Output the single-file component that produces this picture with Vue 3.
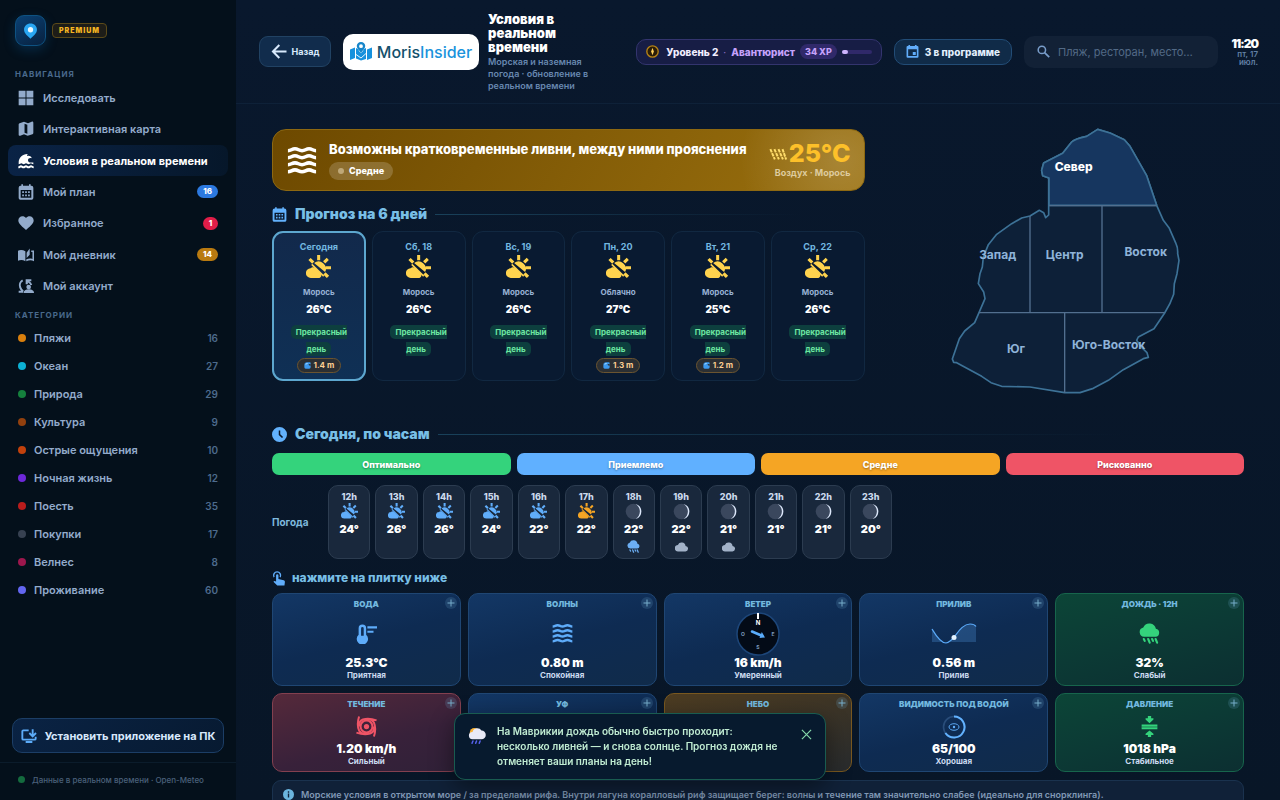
<script setup>
import { ref } from 'vue'

const nav = [
  { icon: 'grid', label: 'Исследовать' },
  { icon: 'map', label: 'Интерактивная карта' },
  { icon: 'tsunami', label: 'Условия в реальном времени', active: true },
  { icon: 'calendar', label: 'Мой план', badge: 16, tone: 'blue' },
  { icon: 'heart', label: 'Избранное', badge: 1, tone: 'red' },
  { icon: 'journal', label: 'Мой дневник', badge: 14, tone: 'gold' },
  { icon: 'account', label: 'Мой аккаунт' },
]

const categories = [
  { label: 'Пляжи', count: 16, color: '#d97f0d' },
  { label: 'Океан', count: 27, color: '#0cb0d4' },
  { label: 'Природа', count: 29, color: '#15803d' },
  { label: 'Культура', count: 9, color: '#92400e' },
  { label: 'Острые ощущения', count: 10, color: '#c2410c' },
  { label: 'Ночная жизнь', count: 12, color: '#6d28d9' },
  { label: 'Поесть', count: 35, color: '#b91c1c' },
  { label: 'Покупки', count: 17, color: '#374151' },
  { label: 'Велнес', count: 8, color: '#9d174d' },
  { label: 'Проживание', count: 60, color: '#6366f1' },
]

const days = [
  { name: 'Сегодня', text: 'Морось', temp: '26°C', wave: '1.4 m', today: true },
  { name: 'Сб, 18', text: 'Морось', temp: '26°C' },
  { name: 'Вс, 19', text: 'Морось', temp: '26°C' },
  { name: 'Пн, 20', text: 'Облачно', temp: '27°C', wave: '1.3 m' },
  { name: 'Вт, 21', text: 'Морось', temp: '25°C', wave: '1.2 m' },
  { name: 'Ср, 22', text: 'Морось', temp: '26°C' },
]

const legend = [
  { label: 'Оптимально', tone: 'green' },
  { label: 'Приемлемо', tone: 'blue' },
  { label: 'Средне', tone: 'orange' },
  { label: 'Рискованно', tone: 'red' },
]

const hours = [
  { h: '12h', t: '24°', icon: 'partly' },
  { h: '13h', t: '26°', icon: 'partly' },
  { h: '14h', t: '26°', icon: 'partly' },
  { h: '15h', t: '24°', icon: 'partly' },
  { h: '16h', t: '22°', icon: 'partly' },
  { h: '17h', t: '22°', icon: 'partly', warm: true },
  { h: '18h', t: '22°', icon: 'moon', extra: 'rain' },
  { h: '19h', t: '22°', icon: 'moon', extra: 'cloud' },
  { h: '20h', t: '21°', icon: 'moon', extra: 'cloud' },
  { h: '21h', t: '21°', icon: 'moon' },
  { h: '22h', t: '21°', icon: 'moon' },
  { h: '23h', t: '20°', icon: 'moon' },
]

const tiles = [
  { title: 'ВОДА', icon: 'thermo', value: '25.3°C', note: 'Приятная', tone: 'blue' },
  { title: 'ВОЛНЫ', icon: 'waves', value: '0.80 m', note: 'Спокойная', tone: 'blue' },
  { title: 'ВЕТЕР', icon: 'compass', value: '16 km/h', note: 'Умеренный', tone: 'blue' },
  { title: 'ПРИЛИВ', icon: 'tide', value: '0.56 m', note: 'Прилив', tone: 'blue' },
  { title: 'ДОЖДЬ · 12H', icon: 'rain', value: '32%', note: 'Слабый', tone: 'green' },
  { title: 'ТЕЧЕНИЕ', icon: 'vortex', value: '1.20 km/h', note: 'Сильный', tone: 'red' },
  { title: 'УФ', icon: 'sun', tone: 'blue' },
  { title: 'НЕБО', icon: 'cloud', tone: 'amber' },
  { title: 'ВИДИМОСТЬ ПОД ВОДОЙ', icon: 'gauge', value: '65/100', note: 'Хорошая', tone: 'blue' },
  { title: 'ДАВЛЕНИЕ', icon: 'pressure', value: '1018 hPa', note: 'Стабильное', tone: 'green' },
]

const query = ref('')
const xp = ref(20)
const toastOpen = ref(true)
</script>

<template>
  <div class="app">
    <svg class="sprite" aria-hidden="true">
      <symbol id="i-grid" viewBox="0 0 24 24"><path fill="currentColor" d="M1 1h10.300v10.300H1zM1 12.700h10.300V23H1zM12.700 12.700H23V23H12.700zM12.700 1H23v10.300H12.700z" /></symbol>
      <symbol id="i-map" viewBox="0 0 24 24"><path fill="currentColor" d="M14.500 22 9 20 3.500 22C2.200 22.500 1 21.700 1 20.500V5c0-.8.500-1.400 1.300-1.700L9 1l6 2.200L20.500 1C21.700.6 23 1.300 23 2.600V18c0 .8-.5 1.400-1.300 1.700zM14 19.300V5.500L9.800 4v13.700z" /></symbol>
      <symbol id="i-tsunami" viewBox="0 0 24 24">
        <path fill="currentColor" d="M1 14C1 7 7 1 15 1.500c-1.500 1-1.900 2.200-1 3.100 2-.9 5.500.2 7 3.400-3-1.300-6 0-6 2.800 0 2 1.700 3.500 4.500 3.500H23v2.500c-2 0-2.500-1.300-3.600-1.300-1.500 0-1.800 1.300-3.500 1.300S13.500 15.500 12 15.500s-1.800 1.300-3.400 1.300-2.300-1.300-3.400-1.300C4 15.500 2.500 16.800 1 16.800z" />
        <path fill="none" stroke="currentColor" stroke-width="3" d="M.5 21.500c1.900 0 2.200-1.500 3.900-1.500s2.200 1.500 3.800 1.500S10.300 20 12 20s2.100 1.500 3.700 1.500 2.200-1.500 3.800-1.500 2 1.500 4 1.500" />
      </symbol>
      <symbol id="i-calendar" viewBox="0 0 24 24"><path fill="currentColor" fill-rule="evenodd" d="M5 .500h2.500v2h9v-2H19v2h1a3 3 0 0 1 3 3V21a2.500 2.500 0 0 1-2.500 2.500h-17A2.500 2.500 0 0 1 1 21V5.500a3 3 0 0 1 3-3h1zM4 9v11.500h16V9z" /><path fill="currentColor" d="M6.300 11h2.600v2.600H6.300zM10.700 11h2.600v2.600h-2.600zM15.100 11h2.600v2.600h-2.600zM6.300 15.600h2.600v2.600H6.300zM10.700 15.600h2.600v2.600h-2.600zM15.100 15.600h2.600v2.600h-2.600z" /></symbol>
      <symbol id="i-heart" viewBox="0 0 24 24"><path fill="currentColor" d="M12 22.500l-1.600-1.400C4.600 16 .5 12.400.5 8.200.5 4.700 3.200 2 6.700 2c2 0 4 1 5.300 2.500C13.300 3 15.300 2 17.300 2c3.500 0 6.200 2.700 6.200 6.200 0 4.200-4.100 7.800-9.900 12.900z" /></symbol>
      <symbol id="i-journal" viewBox="0 0 26 24"><path fill="currentColor" d="M0 5c3.500-1.700 8-1.500 12 .8V22c-4-2.200-8-2.200-12-.8zM14 8.500 19 1.500v10L14 17zM21.500 4.500H26V22c-4-2-8-2-12.500.3V19c3-1.300 6.500-1.500 10-.6V7h-2z" /></symbol>
      <symbol id="i-account" viewBox="0 0 24 24"><path fill="none" stroke="currentColor" stroke-width="3" d="M7 3.500A8.500 8.500 0 0 0 3.300 14c.8 2.400 2.200 4.300 4.400 6M1 20.500h7" /><path fill="currentColor" d="M11.500 2h8.500v2.700h-3c2 1.200 3.700 3.300 4.300 5.800h-3c-.5-1.500-1.700-2.800-3.500-3.600V9.500h-3.300z" /><circle cx="16" cy="13.500" r="3.500" fill="currentColor" /><path fill="currentColor" d="M8.500 22.500c0-3.800 3-5.500 7.500-5.500s8 1.700 8 5.500z" /></symbol>
      <symbol id="i-install" viewBox="0 0 24 24"><path fill="none" stroke="currentColor" stroke-width="2.800" d="M11.500 3.500H3.500A1.500 1.500 0 0 0 2 5v11a1.500 1.500 0 0 0 1.500 1.500h17A1.500 1.500 0 0 0 22 16v-3M17.500 2v10M12.500 7.500l5 5 5-5M7 21h10" /></symbol>
      <symbol id="i-back" viewBox="0 0 24 24"><path fill="none" stroke="currentColor" stroke-width="3.200" d="M24 12H3M12.500 1.500 2.300 12l10.200 10.500" /></symbol>
      <symbol id="i-event" viewBox="0 0 24 24"><path fill="currentColor" fill-rule="evenodd" d="M4.500 0h3v2h9V0h3v2H21a2 2 0 0 1 2 2v17.500a2 2 0 0 1-2 2H3a2 2 0 0 1-2-2V4a2 2 0 0 1 2-2h1.500zM4 8v12.500h16V8zM12.500 13H18v5.500h-5.500z" /></symbol>
      <symbol id="i-search" viewBox="0 0 24 24"><circle cx="9" cy="9" r="6.800" fill="none" stroke="currentColor" stroke-width="2.800" /><path stroke="currentColor" stroke-width="3.200" d="m13.500 13.500 9 9" /></symbol>
      <symbol id="i-waves" viewBox="0 0 32 28"><path fill="none" stroke="currentColor" stroke-width="3.800" d="M1 3.500c3.500 0 4-2 7.500-2s4 2 7.500 2 4-2 7.500-2 4 2 7.500 2M1 11c3.500 0 4-2 7.500-2s4 2 7.500 2 4-2 7.500-2 4 2 7.500 2M1 18.500c3.500 0 4-2 7.500-2s4 2 7.500 2 4-2 7.500-2 4 2 7.500 2M1 26c3.500 0 4-2 7.500-2s4 2 7.500 2 4-2 7.500-2 4 2 7.500 2" /></symbol>
      <symbol id="i-shower" viewBox="0 0 20 14"><path fill="none" stroke="currentColor" stroke-width="2.200" stroke-dasharray="4 .8" d="m1.500 1 5 11.500M6 1l5 11.500M10.500 1l5 11.500M15 1l4 11.500" /></symbol>
      <symbol id="i-partly" viewBox="0 0 24 24">
        <path fill="currentColor" d="M10.700 0h2.900v5h-2.900zM19 10.900h5v2.900h-5zM2.300 4.900 4.500 2.800 8 6.200 5.900 8.300zM16.400 6.100l3.500-3.500 2 2.100-3.400 3.500zM16.600 18.800l2.200-2.200 3.400 3.400-2.200 2.200zM7.800 7.700a7 7 0 0 1 10.500 8.700z" />
        <path fill="currentColor" d="M4.600 22a4.600 4.600 0 0 1-.2-9.200c.5-.5 1-.8 1.500-1 1.500 0 2.800.5 3.800 1.500l4.700 4.600a2.800 2.800 0 0 1-1.500 4.100z" />
        <path stroke="currentColor" stroke-width="1.500" d="m5.500 9 11.500 11.300" />
      </symbol>
      <symbol id="i-clock" viewBox="0 0 24 24"><path fill="currentColor" fill-rule="evenodd" d="M12 0a12 12 0 1 1 0 24 12 12 0 0 1 0-24zm-1.200 5.500v7.200l5.200 5 1.700-1.700-4.500-4.300V5.500z" /></symbol>
      <symbol id="i-touch" viewBox="0 0 24 24"><path fill="none" stroke="currentColor" stroke-width="2.400" d="M3.500 9.500a6 6 0 1 1 10.500 0" /><path fill="currentColor" d="M7 6.500a2 2 0 0 1 4 0V13l9 2.200c1.500.4 2.300 1.500 2.100 3L21.400 24H9L2.500 17.500l1.300-1.400L7 17z" /></symbol>
      <symbol id="i-cloud" viewBox="0 0 24 20"><path fill="currentColor" d="M6 19a6 6 0 0 1-.7-12A7.500 7.500 0 0 1 19.500 9 5 5 0 0 1 18.500 19z" /></symbol>
      <symbol id="i-rain" viewBox="0 0 24 24"><path fill="currentColor" d="M5.800 15.800A5.500 5.500 0 0 1 4.900 5a7.600 7.600 0 0 1 14.400 1.700 4.600 4.600 0 0 1-.4 9.100z" /><path fill="none" stroke="currentColor" stroke-width="2.400" stroke-linecap="round" d="m5.500 18.300 1 2.200M10.500 18.300l1.700 4.200M15 18.300l1 2.200M19 18.300l1.700 4.200" /></symbol>
      <symbol id="i-moon" viewBox="0 0 24 24"><circle cx="12" cy="12" r="11" fill="#3a475d" /><path fill="#dce7fa" d="M15 1.400a11 11 0 0 1 0 21.200c8-5 8-16 0-21.200z" /></symbol>
      <symbol id="i-wave" viewBox="0 0 20 20"><path fill="#3d99ee" d="M1 9Q1 1 9 1h8q2 0 2 3v3q-3-2-5-1-2 2 1 4h4v5q0 4-4 4H5q-4 0-4-4z" /><path fill="#b8e5ff" d="M4 7q2-4 8-4l-2 2q-3 0-4 3z" /></symbol>
      <symbol id="i-thermo" viewBox="0 0 24 24"><path fill="currentColor" fill-rule="evenodd" d="M3 6a4.300 4.300 0 0 1 8.600 0v7.300A6.500 6.500 0 1 1 3 13.300zM5.800 6.200v8.500h3V6.200a1.500 1.500 0 0 0-3 0z" /><path stroke="currentColor" stroke-width="2.500" d="M13 5h11M13 10h7" /></symbol>
      <symbol id="i-vortex" viewBox="0 0 24 24"><g fill="none" stroke="currentColor" stroke-width="2.300"><circle cx="12" cy="12" r="6.800" /><path d="M23.500 5C19 3.500 13 2.500 8 4 4.500 5.500 3 8.500 4 12M3.500 .500C2 5.500 1.500 12 3.500 16.500 5.500 20 8.500 21 12 20M.500 19c4.500 1.500 10.500 2.500 15.500 1 3.500-1.500 5-4.500 4-8M20.500 23.500c1.500-5 2-11.500 0-16C18.500 4 15.500 3 12 4" /></g><circle cx="12" cy="12" r="3" fill="currentColor" /></symbol>
      <symbol id="i-sun" viewBox="0 0 24 24"><circle cx="12" cy="12" r="6" fill="currentColor" /></symbol>
      <symbol id="i-pressure" viewBox="0 0 24 32"><path fill="currentColor" d="M9.500 0h5v3.500H18v2L12 11 6 5.500v-2h3.500zM0 13h24v2.600H0zM0 17.400h24V20H0zM12 22l6 5v2h-3.500v3h-5v-3H6v-2z" /><path fill="currentColor" opacity=".6" d="M0 15h24v3H0z" /></symbol>
      <symbol id="i-tide" viewBox="0 0 46 22"><path fill="#5aa9f8" opacity=".25" d="M1 6c3 5 8 14 14 14 8 0 13-19 24-19 3 0 5 1 6 2.500V19H1z" /><path fill="none" stroke="#5aa9f8" stroke-width="1.200" d="M1 6c3 5 8 14 14 14 8 0 13-19 24-19 3 0 5 1 6 2.500" /><circle cx="23" cy="14.500" r="2.500" fill="#e2f2ff" /></symbol>
      <symbol id="i-gauge" viewBox="0 0 24 24"><g fill="none" stroke-width="1.600"><circle cx="12" cy="12" r="10.500" stroke="#294d7a" /><path stroke="#62b2ff" stroke-width="2" d="M12 1.500a10.500 10.500 0 1 1-8.600 16.500" /><ellipse cx="12" cy="12" rx="5" ry="3.300" stroke="#62b2ff" stroke-width=".9" /></g><circle cx="12" cy="12" r="1.200" fill="#62b2ff" /></symbol>
      <symbol id="i-info" viewBox="0 0 24 24"><path fill="currentColor" fill-rule="evenodd" d="M12 0a12 12 0 1 1 0 24 12 12 0 0 1 0-24zm-1.500 5v3h3V5zm0 5v8.500h3V10z" /></symbol>
      <symbol id="i-close" viewBox="0 0 24 24"><path stroke="currentColor" stroke-width="2.600" d="m2 2 20 20M22 2 2 22" /></symbol>
    </svg>

    <aside class="side">
      <div class="brand">
        <span class="pin">
          <svg viewBox="0 0 24 26" aria-hidden="true"><path fill="#29a6f2" d="M12 1c6 0 10.500 4.300 10.500 9.800C22.500 17 16 21 12 25.500 8 21 1.500 17 1.500 10.800 1.500 5.300 6 1 12 1z" /><circle cx="12" cy="11" r="4.300" fill="#e8f7ff" /></svg>
        </span>
        <span class="premium">PREMIUM</span>
      </div>
      <h2 class="side-title">НАВИГАЦИЯ</h2>
      <nav class="nav">
        <a v-for="n in nav" :key="n.label" href="#" class="nav-item" :class="{ active: n.active }">
          <svg class="nav-ico" aria-hidden="true"><use :href="'#i-' + n.icon" /></svg>
          <span>{{ n.label }}</span>
          <b v-if="n.badge" class="badge" :class="n.tone">{{ n.badge }}</b>
        </a>
      </nav>
      <h2 class="side-title cats-title">КАТЕГОРИИ</h2>
      <nav class="cats">
        <a v-for="c in categories" :key="c.label" href="#" class="cat">
          <i class="dot" :style="{ background: c.color }"></i>
          <span>{{ c.label }}</span>
          <em>{{ c.count }}</em>
        </a>
      </nav>
      <button class="install" type="button">
        <svg aria-hidden="true"><use href="#i-install" /></svg>Установить приложение на ПК
      </button>
      <footer class="live"><i></i>Данные в реальном времени · Open-Meteo</footer>
    </aside>

    <div class="page">
      <header class="top">
        <button class="back" type="button"><svg aria-hidden="true"><use href="#i-back" /></svg>Назад</button>
        <div class="identity">
          <a class="logo" href="#">
            <svg viewBox="0 0 44 38" aria-hidden="true">
              <path fill="#1691dd" d="M0 15l10-4v21L0 36zM12 12l4 2c1.500 4 4 6 6 8.500 2-2.500 4.500-4.500 6-8.500l4-2v22l-10 3-10-4zM34 15l10-4v21l-10 4z" />
              <path fill="none" stroke="#fff" stroke-width="1.800" d="m12 25 10 7 10-9" />
              <path fill="#1686ca" fill-rule="evenodd" d="M22 0c5 0 8.500 3.500 8.500 8 0 5-5 8.500-8.500 14-3.500-5.500-8.500-9-8.500-14C13.500 3.500 17 0 22 0zm0 4.500a3.800 3.800 0 1 0 0 7.600 3.800 3.800 0 0 0 0-7.600z" />
            </svg>
            <span>Moris<b>Insider</b></span>
          </a>
          <div class="titles">
            <h1>Условия в реальном времени</h1>
            <p>Морская и наземная погода · обновление в реальном времени</p>
          </div>
        </div>
        <div class="level">
          <svg viewBox="0 0 24 24" aria-hidden="true"><circle cx="12" cy="12" r="10.500" fill="#2b1d08" stroke="#b98516" stroke-width="2.500" /><path fill="#ffd25c" d="m12 5 2.500 7-2.500 7-2.500-7z" /></svg>
          <strong>Уровень 2</strong><span class="sep">·</span><strong class="rank">Авантюрист</strong>
          <span class="xp">34 XP</span>
          <span class="bar"><i :style="{ width: xp + '%' }"></i></span>
        </div>
        <button class="plan" type="button"><svg aria-hidden="true"><use href="#i-event" /></svg>3 в программе</button>
        <label class="search">
          <svg aria-hidden="true"><use href="#i-search" /></svg>
          <input v-model="query" type="text" aria-label="Поиск" placeholder="Пляж, ресторан, место…" />
        </label>
        <div class="clock"><b>11:20</b><span>пт, 17 июл.</span></div>
      </header>

      <main class="main">
        <section class="overview">
          <div class="left">
            <div class="banner">
              <svg class="banner-ico" aria-hidden="true"><use href="#i-waves" /></svg>
              <div class="banner-text">
                <h2>Возможны кратковременные ливни, между ними прояснения</h2>
                <span class="chip"><i></i>Средне</span>
              </div>
              <div class="air">
                <div><svg aria-hidden="true"><use href="#i-shower" /></svg><b>25°C</b></div>
                <span>Воздух · Морось</span>
              </div>
            </div>
            <h3 class="section fc-title"><svg aria-hidden="true"><use href="#i-calendar" /></svg>Прогноз на 6 дней</h3>
            <div class="days">
              <button v-for="d in days" :key="d.name" type="button" class="day" :class="{ today: d.today }">
                <span class="day-name">{{ d.name }}</span>
                <svg class="day-ico" aria-hidden="true"><use href="#i-partly" /></svg>
                <span class="day-text">{{ d.text }}</span>
                <strong>{{ d.temp }}</strong>
                <span class="mood"><span>Прекрасный день</span></span>
                <span v-if="d.wave" class="surf"><svg aria-hidden="true"><use href="#i-wave" /></svg>{{ d.wave }}</span>
              </button>
            </div>
          </div>

          <svg class="island" viewBox="60 50 696 810" role="img" aria-label="Регионы острова">
            <path class="land" d="M503 57 540 68 583 88 600 108 650 196 680 285 700 330 718 354 738 400Q744 412 743 430L747 450 741 490 733 520 731 552Q722 580 704 608L672 655 625 680 620 690 632 708 651 727 655 741 640 745 580 778 535 810 490 834 450 847 404 847 300 830 215 828 183 817 155 798 80 757 71 756 67 746 88 685 104 662 134 637 147 607 165 565 161 545 145 520 150 490 157 470 160 440 175 403 200 372 245 340 275 323 300 317 328 300 341 307 347 322 356 314V203L338 196 335 180 341 158 398 129 425 95Q435 85 470 78Z" />
            <path class="north" d="M503 57 540 68 583 88 600 108 650 196 680 285H357V203L338 196 335 180 341 158 398 129 425 95Q435 85 470 78Z" />
            <path class="split" d="M357 286H680M300 317V607M516 286V607M147 607H704M404 607V847" />
            <g class="names">
              <text x="431" y="181" class="on">Север</text>
              <text x="203" y="445">Запад</text>
              <text x="404" y="445">Центр</text>
              <text x="647" y="437">Восток</text>
              <text x="258" y="728">Юг</text>
              <text x="536" y="716">Юго-Восток</text>
            </g>
          </svg>
        </section>

        <h3 class="section hr-title"><svg aria-hidden="true"><use href="#i-clock" /></svg>Сегодня, по часам</h3>
        <div class="legend">
          <button v-for="l in legend" :key="l.label" type="button" :class="l.tone">{{ l.label }}</button>
        </div>
        <div class="hourly">
          <span class="row-label">Погода</span>
          <div class="hours">
            <div v-for="x in hours" :key="x.h" class="hour">
              <span>{{ x.h }}</span>
              <svg :class="['hour-ico', { warm: x.warm }]" aria-hidden="true"><use :href="'#i-' + x.icon" /></svg>
              <strong>{{ x.t }}</strong>
              <svg v-if="x.extra" :class="['extra', x.extra]" aria-hidden="true"><use :href="'#i-' + x.extra" /></svg>
            </div>
          </div>
        </div>
        <p class="hint"><svg aria-hidden="true"><use href="#i-touch" /></svg>нажмите на плитку ниже</p>
        <div class="tiles">
          <button v-for="t in tiles" :key="t.title" type="button" class="tile" :class="t.tone">
            <span class="tile-title">{{ t.title }}</span>
            <svg class="plus" viewBox="0 0 12 12" aria-hidden="true"><circle cx="6" cy="6" r="6" fill="#6eaad2" opacity=".18" /><path stroke="#76adca" d="M2.500 6h7M6 2.500v7" /></svg>
            <span class="slot">
              <svg v-if="t.icon === 'compass'" class="compass" viewBox="0 0 44 44" aria-hidden="true">
                <circle cx="22" cy="22" r="21" fill="#030b17" stroke="#1d4679" stroke-width="1.500" />
                <path stroke="#fff" stroke-width="2" d="M22 1v6" />
                <g class="points">
                  <text x="22" y="13" class="lead">N</text>
                  <text x="37" y="24">E</text>
                  <text x="22" y="37">S</text>
                  <text x="7" y="24">O</text>
                </g>
                <path stroke="#5aacfb" stroke-width="2.600" stroke-linecap="round" d="m16 19.500 10 4.200" />
                <path fill="#5aacfb" d="m23.500 26 2.300-6 3.200 5.500z" />
              </svg>
              <svg v-else :class="t.icon" aria-hidden="true"><use :href="'#i-' + t.icon" /></svg>
            </span>
            <strong>{{ t.value }}</strong>
            <span class="note">{{ t.note }}</span>
          </button>
        </div>
        <p class="info"><svg aria-hidden="true"><use href="#i-info" /></svg>Морские условия в открытом море / за пределами рифа. Внутри лагуна коралловый риф защищает берег: волны и течение там значительно слабее (идеально для снорклинга).</p>
      </main>
    </div>

    <div v-if="toastOpen" class="toast" role="status">
      <svg class="toast-ico" viewBox="0 0 20 20" aria-hidden="true">
        <circle cx="7" cy="6" r="5" fill="#f9b233" />
        <path fill="#e9eaf6" d="M5 13.500a4 4 0 0 1 0-8 5.500 5.500 0 0 1 10-1.500 4.700 4.700 0 0 1 0 9.500z" />
        <path stroke="#5661ea" stroke-width="1.700" stroke-linecap="round" d="m5.500 15.500-1 2.500M9.500 15.500l-1 2.500M13.500 15.500l-1 2.500" />
      </svg>
      <p>На Маврикии дождь обычно быстро проходит: несколько ливней — и снова солнце. Прогноз дождя не отменяет ваши планы на день!</p>
      <button type="button" aria-label="Закрыть" @click="toastOpen = false"><svg aria-hidden="true"><use href="#i-close" /></svg></button>
    </div>
  </div>
</template>

<style>
html,
body {
  background: #081628;
}
</style>

<style scoped>
* { box-sizing: border-box; margin: 0; }
.app {
  display: flex;
  height: 100vh;
  overflow: hidden;
  font-family: Inter, "Noto Sans", sans-serif;
  color: #fff;
  background: linear-gradient(180deg, #09182d, #081627);
}
.sprite { position: absolute; width: 0; height: 0; }
button { font-family: inherit; color: inherit; cursor: pointer; }
a { text-decoration: none; color: inherit; }

/* sidebar */
.side {
  display: flex;
  flex: 0 0 236px;
  flex-direction: column;
  background: #04101b;
}
.brand { display: flex; align-items: center; gap: 6px; padding: 15px 15px 0; }
.pin {
  display: grid;
  place-items: center;
  width: 31px;
  height: 31px;
  border: 1px solid #0e5282;
  border-radius: 9px;
  background: linear-gradient(150deg, #0a4174, #08213f);
  box-shadow: 0 4px 12px rgba(14, 100, 170, .3);
}
.pin svg { width: 15px; height: 16px; }
.premium {
  padding: 0 6px;
  border: 1px solid #5b4a19;
  border-radius: 4px;
  background: #1d1d18;
  color: #f3b422;
  font-size: 7px;
  font-weight: 900;
  line-height: 13px;
  letter-spacing: 1px;
}
.side-title {
  padding: 0 15px;
  margin-top: 23px;
  color: #49698c;
  font-size: 8px;
  font-weight: 700;
  line-height: 10px;
  letter-spacing: 1px;
}
.nav { display: grid; grid-auto-rows: 1fr; min-height: 220px; padding: 0 8px; margin-top: 3px; }
.nav-item {
  display: flex;
  align-items: center;
  gap: 9px;
  padding: 0 10px;
  border-radius: 8px;
  color: #93abcb;
  font-size: 11px;
  font-weight: 600;
}
.nav-item.active { color: #fff; font-weight: 700; background: linear-gradient(90deg, #0a2346, #06172a); }
.nav-ico { width: 16px; height: 16px; }
.badge {
  min-width: 15px;
  padding: 0 6px;
  margin-left: auto;
  border-radius: 7px;
  color: #fff;
  font-size: 8px;
  font-weight: 800;
  line-height: 13px;
  text-align: center;
}
.badge.blue { background: #2c79e0; }
.badge.red { background: #e11d48; padding: 0 5px; }
.badge.gold { background: #b97a10; }
.cats-title { margin-top: 8px; }
.cats { padding: 0 18px; margin-top: 4px; }
.cat {
  display: flex;
  align-items: center;
  gap: 8px;
  height: 28px;
  color: #93abcb;
  font-size: 11px;
  font-weight: 600;
}
.cat .dot { width: 8px; height: 8px; border-radius: 50%; }
.cat em { margin-left: auto; color: #4d6b8d; font-size: 10px; font-style: normal; }
.install {
  display: flex;
  align-items: center;
  justify-content: center;
  gap: 8px;
  height: 35px;
  padding: 0;
  margin: auto 12px 9px;
  border: 1px solid #1c3e66;
  border-radius: 10px;
  background: linear-gradient(135deg, #0a2344, #071a31);
  color: #d7e8fc;
  font-size: 11px;
  font-weight: 700;
  white-space: nowrap;
}
.install svg { width: 16px; height: 16px; color: #5cabf8; }
.live {
  display: flex;
  align-items: center;
  gap: 7px;
  height: 38px;
  padding: 0 18px 4px;
  border-top: 1px solid #0b1c2b;
  color: #4a607a;
  font-size: 8px;
  font-weight: 500;
  white-space: nowrap;
}
.live i { width: 7px; height: 7px; border-radius: 50%; background: #146b3e; }

/* header */
.page { display: flex; flex: 1; flex-direction: column; min-width: 0; }
.top {
  display: flex;
  flex: none;
  align-items: center;
  gap: 12px;
  height: 104px;
  padding: 0 22px 0 23px;
  border-bottom: 1px solid #0e2138;
}
.back {
  display: flex;
  flex: none;
  align-items: center;
  justify-content: center;
  gap: 5px;
  width: 72px;
  height: 31px;
  padding: 0;
  border: 1px solid #214263;
  border-radius: 9px;
  background: #112c4c;
  color: #d8e9fc;
  font-size: 9px;
  font-weight: 700;
}
.back svg { width: 16px; height: 15px; }
.identity { display: flex; flex: 1; align-items: center; gap: 9px; min-width: 0; }
.logo {
  display: flex;
  flex: none;
  align-items: center;
  justify-content: center;
  gap: 5px;
  width: 136px;
  height: 36px;
  border-radius: 10px;
  background: #fff;
  color: #14506c;
  font-size: 16px;
  font-weight: 500;
}
.logo svg { width: 22px; height: 19px; }
.logo b { color: #1a93dc; font-weight: 500; }
.titles { flex: 1; min-width: 0; max-width: 112px; }
.titles h1 { font-size: 13px; font-weight: 900; line-height: 14px; }
.titles p { margin-top: 2px; color: #6787af; font-size: 9px; font-weight: 600; line-height: 12px; }
.level {
  display: flex;
  align-items: center;
  gap: 5px;
  height: 26px;
  padding: 0 9px;
  border: 1px solid #33346e;
  border-radius: 10px;
  background: #171d45;
  font-size: 10px;
  white-space: nowrap;
}
.level svg { width: 13px; height: 13px; margin-right: 2px; }
.level strong { color: #f1edff; font-weight: 800; }
.level .rank { color: #c5a2fb; }
.level .sep { color: #8c72c4; }
.xp { padding: 0 5px; border-radius: 8px; background: #30296a; color: #c5a2fb; font-size: 9px; font-weight: 800; line-height: 15px; }
.bar { display: block; width: 30px; height: 4px; border-radius: 2px; background: #30296a; }
.bar i { display: block; height: 4px; border-radius: 2px; background: #cdb4fd; }
.plan {
  display: flex;
  align-items: center;
  gap: 6px;
  height: 26px;
  padding: 0 11px;
  border: 1px solid #224c76;
  border-radius: 10px;
  background: #102b48;
  color: #e2effd;
  font-size: 10px;
  font-weight: 800;
  white-space: nowrap;
}
.plan svg { width: 13px; height: 13px; color: #61adfa; }
.search {
  display: flex;
  flex: 0 1 194px;
  align-items: center;
  gap: 8px;
  height: 32px;
  padding: 0 13px;
  border-radius: 10px;
  background: #122136;
}
.search svg { flex: none; width: 13px; height: 13px; color: #799dca; }
.search input { width: 100%; min-width: 0; padding: 0; border: 0; outline: 0; background: none; color: #fff; font: 11px Inter, sans-serif; }
.search input::placeholder { color: #526a86; }
.clock { width: 28px; text-align: right; }
.clock b { display: block; font-size: 12px; font-weight: 900; line-height: 13px; letter-spacing: -1px; }
.clock span { display: block; color: #6280a5; font-size: 8px; font-weight: 600; line-height: 8px; }

/* content */
.main { flex: 1; min-height: 0; overflow-y: auto; padding: 25px 36px 20px; scrollbar-width: none; }
.overview { display: grid; grid-template-columns: 5fr 3fr; gap: 24px; }
.left { min-width: 0; }
.banner {
  display: flex;
  align-items: center;
  gap: 12px;
  min-height: 62px;
  padding: 0 13px 0 14px;
  border: 1px solid #8d6811;
  border-radius: 14px;
  background: radial-gradient(circle at 96% 50%, rgba(255, 255, 255, .16), transparent 100px), linear-gradient(120deg, #6d4900, #9a700e);
}
.banner-ico { flex: none; width: 30px; height: 27px; }
.banner-text { flex: 1; }
.banner h2 { font-size: 13px; font-weight: 800; line-height: 16px; white-space: nowrap; }
.chip {
  display: inline-flex;
  align-items: center;
  gap: 5px;
  padding: 0 9px;
  margin-top: 5px;
  border-radius: 9px;
  background: rgba(255, 255, 255, .18);
  font-size: 9px;
  font-weight: 800;
  line-height: 18px;
}
.chip i { width: 6px; height: 6px; border-radius: 50%; background: #bfa878; }
.air { text-align: right; }
.air div { display: flex; align-items: center; justify-content: flex-end; gap: 2px; }
.air svg { width: 18px; height: 13px; margin-top: 3px; color: #ffdc6a; }
.air b { color: #fdc029; font-size: 25px; font-weight: 800; line-height: 26px; }
.air > span { display: block; color: #decb9e; font-size: 9px; font-weight: 700; line-height: 14px; }
.section {
  display: flex;
  align-items: center;
  gap: 8px;
  color: #78bfe6;
  font-size: 14px;
  font-weight: 900;
  line-height: 18px;
}
.section svg { width: 15px; height: 15px; color: #62b1fc; }
.section::after { content: ""; flex: 1; height: 1px; background: linear-gradient(90deg, #19415a, transparent 85%); }
.fc-title { margin-top: 14px; }
.days { display: grid; grid-template-columns: repeat(6, 1fr); gap: 6px; margin-top: 8px; }
.day {
  display: flex;
  flex-direction: column;
  align-items: center;
  min-width: 0;
  min-height: 150px;
  padding: 8px 12px 7px;
  border: 1px solid #112841;
  border-radius: 11px;
  background: #091a31;
}
.day.today { border: 2px solid #5da7cf; padding: 7px 11px 6px; background: linear-gradient(180deg, #12294b, #0f3055); }
.day-name { color: #73b8e0; font-size: 9px; font-weight: 700; line-height: 14px; }
.day-ico { width: 25px; height: 25px; margin-top: 1px; color: #ffd34e; }
.day-text { margin-top: 5px; color: #97b1d4; font-size: 8px; font-weight: 700; line-height: 14px; }
.day strong { margin-top: 3px; font-size: 10px; font-weight: 900; line-height: 14px; }
.mood { width: 60px; margin-top: 8px; font-size: 8px; font-weight: 700; line-height: 17px; text-align: center; color: #6ce5a1; }
.mood span { padding: 2px 5px; border-radius: 5px; background: #0d3f3e; }
.surf {
  display: flex;
  align-items: center;
  gap: 3px;
  padding: 0 6px;
  border: 1px solid #6b5430;
  border-radius: 8px;
  background: #2b2f33;
  color: #ffd092;
  font-size: 8px;
  font-weight: 700;
  line-height: 13px;
}
.surf svg { width: 7px; height: 7px; }
.island { justify-self: center; width: 232px; height: 270px; margin-top: -2px; }
.land { fill: #0d2038; stroke: #3d7297; stroke-width: 5; stroke-linejoin: round; }
.north { fill: #16365f; stroke: #3d7297; stroke-width: 5; stroke-linejoin: round; }
.split { fill: none; stroke: #526f8f; stroke-width: 4; }
.names { fill: #8fb3d8; font-size: 36px; font-weight: 700; text-anchor: middle; }
.names .on { fill: #fff; font-weight: 800; }

.hr-title { margin-top: 28px; }
.legend { display: grid; grid-template-columns: repeat(4, 1fr); gap: 6px; margin-top: 10px; }
.legend button {
  height: 22px;
  padding: 0;
  border: 0;
  border-radius: 7px;
  font-size: 9px;
  font-weight: 800;
  text-shadow: 0 1px 2px rgba(0, 0, 0, .35);
}
.legend .green { background: #34d37c; }
.legend .blue { background: #60b0ff; }
.legend .orange { background: #f5a524; }
.legend .red { background: #ef5466; }
.hourly { display: flex; align-items: center; margin-top: 10px; }
.row-label { width: 56px; color: #7fb9dd; font-size: 10px; font-weight: 700; }
.hours { display: grid; flex: 0 1 564px; grid-template-columns: repeat(12, 1fr); gap: 5px; }
.hour {
  display: flex;
  flex-direction: column;
  align-items: center;
  height: 74px;
  padding-top: 4px;
  border: 1px solid #2c3c50;
  border-radius: 10px;
  background: #19283c;
}
.hour span { color: #cbd9ec; font-size: 9px; font-weight: 800; line-height: 13px; }
.hour-ico { width: 17px; height: 17px; color: #60adfa; }
.hour-ico.warm { color: #f5a524; }
.hour strong { margin-top: 1px; font-size: 11px; font-weight: 900; line-height: 16px; }
.extra { width: 13px; height: 13px; margin-top: 3px; }
.extra.rain { color: #6caef3; }
.extra.cloud { color: #a2b2c8; }
.hint { display: flex; align-items: center; gap: 6px; margin-top: 10px; color: #78bfe6; font-size: 12px; font-weight: 800; line-height: 18px; }
.hint svg { width: 14px; height: 15px; color: #60adfa; }
.tiles { display: grid; grid-template-columns: repeat(5, 1fr); grid-template-rows: 93px 79px; gap: 7px; margin-top: 6px; }
.tile {
  position: relative;
  display: flex;
  flex-direction: column;
  align-items: center;
  min-width: 0;
  padding: 4px 0 5px;
  border: 1px solid #1f4673;
  border-radius: 10px;
  background: linear-gradient(165deg, #133765, #0e2b52 50%, #102b4a);
}
.tile.green { border-color: #17654c; background: linear-gradient(165deg, #0c4537, #0c3a35 50%, #0c2f31); }
.tile.red { border-color: #83404f; background: linear-gradient(165deg, #55293a, #38213a 60%, #302138); }
.tile.amber { border-color: #79581f; background: linear-gradient(165deg, #4d3c21, #282b2d); }
.tile-title { color: #72b8df; font-size: 8px; font-weight: 900; line-height: 13px; }
.plus { position: absolute; top: 3px; right: 3px; width: 12px; height: 12px; }
.slot { display: flex; flex: 1; align-items: center; justify-content: center; min-height: 0; color: #5eacfa; }
.green .slot { color: #34d37c; }
.red .slot { color: #ef5466; }
.slot svg { width: 21px; height: 21px; }
.slot svg.compass { width: 44px; height: 44px; }
.slot svg.tide { width: 46px; height: 22px; }
.slot svg.gauge { width: 24px; height: 24px; }
.points { fill: #7f9cbd; font-size: 5px; font-weight: 700; text-anchor: middle; }
.points .lead { fill: #fff; font-size: 6px; }
.tile strong { min-height: 14px; font-size: 12px; font-weight: 900; line-height: 14px; }
.tile .note { min-height: 10px; color: #cbdaf0; font-size: 8px; font-weight: 700; line-height: 10px; }
.info {
  display: flex;
  align-items: center;
  gap: 7px;
  min-height: 28px;
  padding: 0 10px;
  margin-top: 8px;
  border: 1px solid #1a324e;
  border-radius: 9px;
  background: #102138;
  color: #8098b5;
  font-size: 9px;
  font-weight: 600;
}
.info svg { flex: none; width: 11px; height: 11px; color: #6bb5de; }

.toast {
  position: fixed;
  bottom: 20px;
  left: 50%;
  display: flex;
  align-items: flex-start;
  gap: 11px;
  width: 372px;
  padding: 10px 13px;
  border: 1px solid #195c50;
  border-radius: 11px;
  background: #071a2e;
  box-shadow: 0 8px 24px rgba(0, 0, 0, .45);
  transform: translateX(-50%);
}
.toast-ico { flex: none; width: 18px; height: 18px; margin-top: 3px; }
.toast p { flex: 0 1 290px; color: #c0ecd2; font-size: 10px; font-weight: 600; line-height: 15px; }
.toast button { width: 11px; height: 11px; padding: 0; margin: 5px 0 0 auto; border: 0; background: none; color: #86d8aa; }
.toast button svg { display: block; width: 11px; height: 11px; }
</style>
